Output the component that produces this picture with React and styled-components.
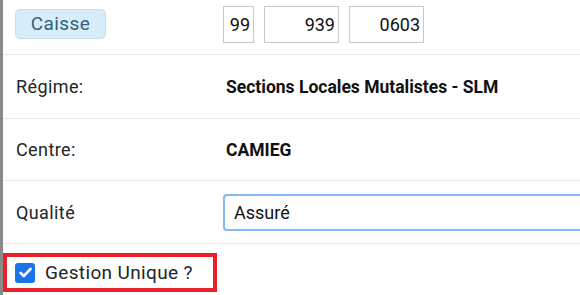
import React from "react";
import styled, { createGlobalStyle } from "styled-components";

const Global = createGlobalStyle`
  html, body { margin: 0; padding: 0; background: #fff; }
  body { font-family: Roboto, "Liberation Sans", sans-serif; color: #212529; overflow: hidden; }
`;

const Panel = styled.div`
  width: 577px;
  height: 295px;
  border-left: 3px solid #8a8a8a;
  display: flex;
  flex-direction: column;
  overflow: hidden;
`;

const Row = styled.div`
  display: grid;
  grid-template-columns: 220px 1fr;
  align-items: center;
  height: ${(p) => p.$h}px;
  border-bottom: 1px solid #e8e8e8;
  flex: none;
`;

const Label = styled.div`
  padding-left: 13px;
  font-size: 18px;
  letter-spacing: 0.4px;
  color: #212529;
`;

const Value = styled.div`
  padding-left: 3px;
  font-size: 17.5px;
  font-weight: 700;
  color: #111;
`;

const Badge = styled.span`
  justify-self: start;
  margin-left: 12px;
  margin-top: -7px;
  box-sizing: border-box;
  width: 91px;
  height: 30px;
  display: flex;
  align-items: center;
  justify-content: center;
  background: #d7edf7;
  border: 1px solid #bfe2f0;
  border-radius: 5px;
  color: #355f7e;
  font-size: 19px;
  letter-spacing: 0.4px;
`;

const Inputs = styled.div`
  display: flex;
  gap: 10px;
  align-items: center;
  margin-top: -6px;
`;

const NumBox = styled.div`
  box-sizing: border-box;
  width: ${(p) => p.$w}px;
  height: 37px;
  border: 1px solid #c8c8c8;
  display: flex;
  align-items: center;
  justify-content: flex-end;
  padding-right: 3px;
  font-size: 18px;
  color: #111;
`;

const Select = styled.div`
  box-sizing: border-box;
  width: 400px;
  height: 37px;
  border: 2px solid #80b9f6;
  border-radius: 4px;
  display: flex;
  align-items: center;
  padding-left: 9px;
  font-size: 18px;
  color: #111;
`;

const CheckArea = styled.div`
  padding: 9px 0 0 0;
`;

const Highlight = styled.label`
  box-sizing: border-box;
  display: flex;
  align-items: center;
  gap: 10px;
  width: 214px;
  height: 39px;
  border: 4px solid #e8202a;
  padding-left: 8px;
  font-size: 19px;
  letter-spacing: 0.35px;
  color: #212529;
`;

const Box = styled.span`
  width: 20px;
  height: 20px;
  border-radius: 3px;
  background: #1a73e8;
  display: flex;
  align-items: center;
  justify-content: center;
  flex: none;
`;

export default function App() {
  return (
    <>
      <Global />
      <Panel>
        <Row $h={54}>
          <Badge>Caisse</Badge>
          <Inputs>
            <NumBox $w={31}>99</NumBox>
            <NumBox $w={75}>939</NumBox>
            <NumBox $w={75}>0603</NumBox>
          </Inputs>
        </Row>
        <Row $h={63}>
          <Label>Régime:</Label>
          <Value>Sections Locales Mutalistes - SLM</Value>
        </Row>
        <Row $h={61}>
          <Label>Centre:</Label>
          <Value>CAMIEG</Value>
        </Row>
        <Row $h={62}>
          <Label>Qualité</Label>
          <Select>Assuré</Select>
        </Row>
        <CheckArea>
          <Highlight>
            <Box>
              <svg width="13" height="11" viewBox="0 0 13 11">
                <path d="M1.5 5.8 L4.8 9 L11.5 2" fill="none" stroke="#fff" strokeWidth="2.6" strokeLinecap="round" strokeLinejoin="round" />
              </svg>
            </Box>
            Gestion Unique ?
          </Highlight>
        </CheckArea>
      </Panel>
    </>
  );
}
